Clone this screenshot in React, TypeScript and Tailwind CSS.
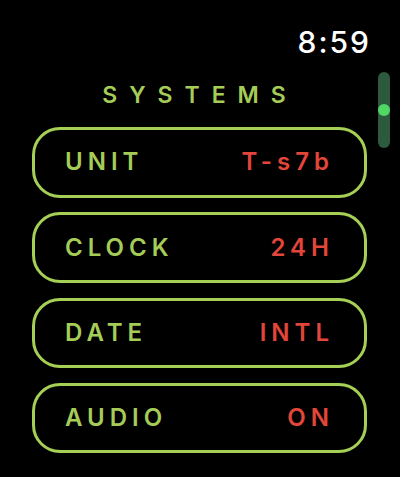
const rows = [
  { label: "UNIT", value: "T-s7b" },
  { label: "CLOCK", value: "24H" },
  { label: "DATE", value: "INTL" },
  { label: "AUDIO", value: "ON" },
];

export default function App() {
  return (
    <div className="relative h-[477px] w-[400px] overflow-hidden bg-black font-['Inter','Liberation_Sans',sans-serif]">
      <div className="flex justify-end pr-[29px] pt-[27px]">
        <span className="text-[30px] leading-none font-medium tracking-[2px] text-white">8:59</span>
      </div>

      {/* scroll indicator */}
      <div className="absolute left-[378px] top-[72px] h-[76px] w-[12px] rounded-full bg-[#2d5a3e]">
        <div className="absolute left-0 top-[32px] h-[12px] w-[12px] rounded-full bg-[#4fd866]" />
      </div>

      <h1 className="mt-[27px] text-center text-[23px] leading-none font-semibold tracking-[12px] text-[#a6cc58]">
        SYSTEMS
      </h1>

      <div className="mt-[20px] ml-[32px] flex w-[335px] flex-col gap-[14.8px]">
        {rows.map((row) => (
          <div
            key={row.label}
            className="flex h-[70.5px] items-center justify-between rounded-[28px] border-[3px] border-[#a6cf55] px-[30px]"
          >
            <span className="text-[24px] leading-none font-semibold tracking-[5px] text-[#a6cc58]">{row.label}</span>
            <span className="text-[24px] leading-none font-semibold tracking-[5px] text-[#e2463a]">{row.value}</span>
          </div>
        ))}
      </div>
    </div>
  );
}
